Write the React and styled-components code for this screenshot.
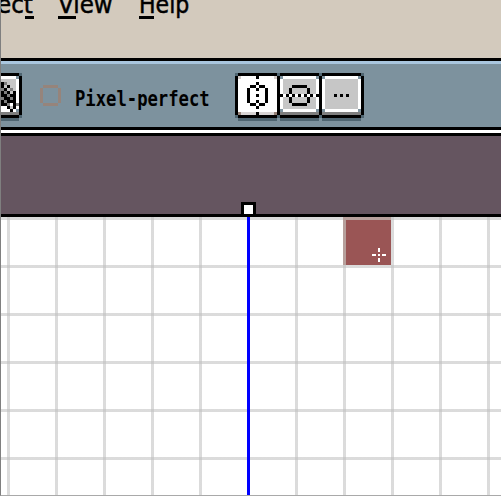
import React from "react";
import styled, { createGlobalStyle, css } from "styled-components";

const Global = createGlobalStyle`
  *{box-sizing:border-box}
  body{margin:0;overflow:hidden;background:#fff}
`;

const layer = (color, x, y, w, h) =>
  `linear-gradient(${color},${color}) ${x}px ${y}px / ${w}px ${h}px no-repeat`;

const Window = styled.main`
  width: 501px;
  height: 496px;
  overflow: hidden;
  display: flex;
  flex-direction: column;
  border-left: 1px solid #7f7f7f;
  border-bottom: 1px solid #a9a9a9;
  background: #fff;
`;

const MenuBar = styled.nav`
  height: 61px;
  flex: none;
  display: flex;
  align-items: flex-start;
  overflow: hidden;
  background: #d3cabd;
  border-bottom: 3px solid #000;
  font: 24px/24px "DejaVu Sans", sans-serif;
  color: #000;
  -webkit-text-stroke: 0.5px #000;
`;

const MenuItem = styled.span`
  display: block;
  flex: none;
  width: ${(p) => p.$width}px;
  margin-left: ${(p) => p.$gap}px;
  height: 26px;
  margin-top: -7px;
  white-space: nowrap;
  background: ${(p) => layer("#000", p.$lineStart, 23, p.$lineWidth, 3)};
`;

const Label = styled.span`
  display: block;
  width: max-content;
  transform: scale(${(p) => p.$scale}, ${(p) => p.$tall || 1});
  transform-origin: 0 0;
`;

const Toolbar = styled.section`
  height: 69px;
  flex: none;
  display: flex;
  align-items: flex-start;
  padding-top: 9px;
  background: #7d929e;
  border-top: 3px solid #a9c6de;
  border-bottom: 3px solid #000;
`;

const pressed = css`
  background:
    ${layer("#4f6571", 0, 0, 3, 3)}, ${layer("#4f6571", 42, 0, 3, 3)},
    ${layer("#4f6571", 0, 42, 3, 3)}, ${layer("#4f6571", 42, 42, 3, 3)},
    ${layer("#d3cbc8", 3, 3, 3, 3)}, ${layer("#d3cbc8", 39, 3, 3, 3)},
    ${layer("#968278", 3, 39, 3, 3)}, ${layer("#968278", 39, 39, 3, 3)},
    ${layer("#d8d4d4", 3, 39, 39, 3)}, ${layer("#fff", 3, 3, 39, 36)},
    ${layer("#000", 0, 0, 45, 45)}, ${layer("#4f6571", 3, 45, 39, 3)};
`;

const raised = css`
  background:
    ${layer("#4f6571", 0, 0, 3, 3)}, ${layer("#4f6571", 42, 0, 3, 3)},
    ${layer("#4f6571", 0, 42, 3, 3)}, ${layer("#4f6571", 42, 42, 3, 3)},
    ${layer("#7d929e", 3, 3, 3, 3)}, ${layer("#7d929e", 39, 3, 3, 3)},
    ${layer("#7d929e", 3, 36, 3, 3)}, ${layer("#7d929e", 39, 36, 3, 3)},
    ${layer("#7f7f7f", 3, 39, 39, 3)}, ${layer("#c6c6c6", 6, 6, 33, 30)},
    ${layer("#fff", 3, 3, 39, 36)}, ${layer("#000", 0, 0, 45, 45)},
    ${layer("#4f6571", 3, 45, 39, 3)};
`;

const ToolButton = styled.button`
  flex: none;
  width: 45px;
  height: 48px;
  padding: 0;
  border: 0;
  margin-left: ${(p) => p.$offset || 0}px;
  ${(p) => (p.$pressed ? pressed : raised)}
  & + & {
    margin-left: -3px;
  }
`;

const ButtonGroup = styled.div`
  display: flex;
  margin-left: 26px;
`;

const Glyph = styled.svg`
  display: block;
  width: 45px;
  height: 48px;
  shape-rendering: crispEdges;
`;

const CheckBox = styled.span`
  flex: none;
  width: 21px;
  height: 21px;
  margin: 12px 0 0 18px;
  background: ${layer("#96847b", 3, 0, 15, 3)}, ${layer("#96847b", 3, 18, 15, 3)},
    ${layer("#96847b", 0, 3, 3, 15)}, ${layer("#96847b", 18, 3, 3, 15)};
`;

const CheckLabel = styled.div`
  flex: none;
  width: 134px;
  margin: 12px 0 0 14px;
  font: bold 20px/26px "DejaVu Sans Mono", monospace;
  white-space: nowrap;
  color: #000;
`;

const TabStrip = styled.div`
  height: 87px;
  flex: none;
  display: flex;
  align-items: flex-end;
  padding-left: 240px;
  background: #655560;
  border-top: 3px solid #fff;
  border-bottom: 3px solid #000;
  box-shadow: inset 0 3px #000;
`;

const Handle = styled.span`
  width: 15px;
  height: 12px;
  background: #fff;
  border: 3px solid #000;
  border-bottom: 0;
`;

const Canvas = styled.section`
  position: relative;
  flex: 1;
  background: #fff;
  overflow: hidden;
`;

const Pixel = styled.div`
  position: absolute;
  left: 342px;
  top: 0;
  width: 48px;
  height: 48px;
  background: #9a5555;
  border: 3px solid #b7a09c;
  border-right: 0;
  border-bottom: 0;
`;

const Grid = styled.div`
  position: absolute;
  inset: 0;
  background:
    repeating-linear-gradient(90deg, rgba(190,190,190,.55) 0 3px, transparent 3px 48px) 6px 0 / 48px 100%,
    repeating-linear-gradient(180deg, rgba(190,190,190,.55) 0 3px, transparent 3px 48px);
`;

const SymmetryAxis = styled.div`
  position: absolute;
  left: 246px;
  top: 0;
  width: 3px;
  height: 100%;
  background: #00f;
`;

const Cursor = styled.svg`
  position: absolute;
  left: 371px;
  top: 31px;
  width: 14px;
  height: 14px;
  shape-rendering: crispEdges;
`;

const ink = { k: "#000", g: "#7f7f7f", w: "#fff", d: "#404040" };

const VERTICAL = [
  "", ".......k", "", ".......k", ".....kk.kk", "....k..k..k",
  "....k.....k", "....k..k..k", "....k.....k", "....k..k..k",
  ".....kk.kk", ".......k", "", ".......k",
];
const HORIZONTAL = [
  "", "", "", "", ".....kkkkk", "....k.....k", "....k.....k",
  "kkwkwkwkwkwkwkk",
  "....k.....k", "....k.....k", ".....kkkkk",
];
const DOTS = ["", "", "", "", "", "", "", ".....k.k.k"];
const BRUSH = [
  "", "", "", "........kg", "........k.k", "........gk.g",
  "........kgk.k", "........kkgkk", "........gkkgk", "........kgkkk",
  "........kkgwkg", "........wwk.kw", "........wwwkw",
];

function PixelGlyph({ rows }) {
  return (
    <Glyph viewBox="0 0 15 16" aria-hidden="true">
      {rows.flatMap((row, y) =>
        [...row].map((c, x) =>
          ink[c] ? <rect key={`${x}-${y}`} x={x} y={y} width="1" height="1" fill={ink[c]} /> : null
        )
      )}
    </Glyph>
  );
}

export default function App() {
  return (
    <Window>
      <Global />
      <MenuBar>
        <MenuItem $gap={-4} $width={37} $lineStart={28} $lineWidth={9}><Label $scale={0.96}>ect</Label></MenuItem>
        <MenuItem $gap={24} $width={54} $lineStart={0} $lineWidth={18}><Label $scale={0.96}>View</Label></MenuItem>
        <MenuItem $gap={27} $width={49} $lineStart={0} $lineWidth={15}><Label $scale={0.92}>Help</Label></MenuItem>
      </MenuBar>
      <Toolbar>
        <ToolButton $offset={-24} aria-label="Brush"><PixelGlyph rows={BRUSH} /></ToolButton>
        <CheckBox />
        <CheckLabel><Label $scale={0.86} $tall={1.04}>Pixel-perfect</Label></CheckLabel>
        <ButtonGroup>
          <ToolButton $pressed aria-label="Vertical symmetry"><PixelGlyph rows={VERTICAL} /></ToolButton>
          <ToolButton aria-label="Horizontal symmetry"><PixelGlyph rows={HORIZONTAL} /></ToolButton>
          <ToolButton aria-label="More options"><PixelGlyph rows={DOTS} /></ToolButton>
        </ButtonGroup>
      </Toolbar>
      <TabStrip><Handle /></TabStrip>
      <Canvas>
        <Grid />
        <Pixel />
        <SymmetryAxis />
        <Cursor viewBox="0 0 14 14" aria-hidden="true">
          <path fill="#fff" d="M6 0h2v4H6zM6 6h2v2H6zM6 10h2v4H6zM0 6h4v2H0zM10 6h4v2h-4z" />
        </Cursor>
      </Canvas>
    </Window>
  );
}
